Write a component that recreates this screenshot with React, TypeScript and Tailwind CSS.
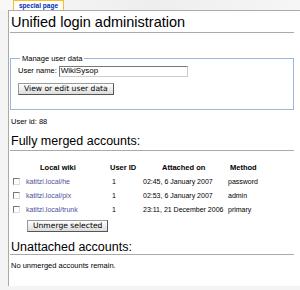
import React from "react";

const rows = [
  { wiki: "katitzi.local/he", id: "1", date: "02:45, 6 January 2007", method: "password" },
  { wiki: "katitzi.local/pix", id: "1", date: "02:53, 6 January 2007", method: "admin" },
  { wiki: "katitzi.local/trunk", id: "1", date: "23:11, 21 December 2006", method: "primary" },
];

function Button({ children }: { children: React.ReactNode }) {
  return (
    <span
      className="
        flex items-center h-[12px] px-[5px]
        bg-gradient-to-b from-[#ffffff] to-[#dcdcdc]
        border border-[#9a9a9a] border-r-[#555] border-b-[#555]
        text-[7.6px] leading-none text-black
        font-['DejaVu_Sans',sans-serif]
      "
    >
      {children}
    </span>
  );
}

function Checkbox() {
  return (
    <span className="block w-[7px] h-[7px] bg-white border border-[#777] border-r-[#ddd] border-b-[#ddd]" />
  );
}

export default function App() {
  return (
    <div className="w-[300px] h-[290px] overflow-hidden bg-[#f4f4f4] font-['Liberation_Sans',Arial,sans-serif] text-black">

      {/* TOP STRIP + TAB */}
      <div className="h-[10px] flex pl-[13px] bg-gradient-to-r from-[#f8f8f8] via-[#eeeeee] to-[#f6f6f6]">
        <div className="w-[51px] h-[10px] bg-white border border-b-0 border-[#fabd23] text-center text-[6.5px] leading-[9px] font-bold text-[#002bb8]">
          special page
        </div>
      </div>

      {/* CONTENT */}
      <div className="ml-[8px] h-[276px] overflow-hidden bg-white border-l border-t border-[#aaa] pl-[1px] pr-[6px]">

        {/* TITLE */}
        <h1 className="mt-[2px] pl-[1px] text-[14.5px] leading-[18px] pb-[1px] border-b border-[#aaa]">
          Unified login administration
        </h1>

        {/* FIELDSET */}
        <fieldset className="mt-[21px] border border-[#9fb6d8] pl-[7px] pb-[14px]">
          <legend className="ml-[2px] px-[2px] text-[7.5px] leading-[9px]">Manage user data</legend>

          <div className="mt-[2.5px] flex items-center h-[11px] text-[7.5px] leading-none">
            <span className="mr-[2px]">User name:</span>
            <span className="w-[129px] h-[11px] flex items-center pl-[1px] bg-white border border-[#777] border-r-[#ccc] border-b-[#ccc] text-[8px]">
              WikiSysop
            </span>
          </div>

          <div className="mt-[6px] flex">
            <Button>View or edit user data</Button>
          </div>
        </fieldset>

        <p className="mt-[7px] pl-[1px] text-[7.5px] leading-[9px]">User id: 88</p>

        {/* FULLY MERGED */}
        <h2 className="mt-[8px] pl-[1px] text-[12.5px] leading-[15px] pb-[1px] border-b border-[#aaa]">
          Fully merged accounts:
        </h2>

        <div className="mt-[10px] grid grid-cols-[14px_86px_31px_85px_1fr] text-[7px] leading-[14px]">
          {/* HEADER */}
          <span />
          <span className="pl-[16px] font-bold text-[7.5px]">Local wiki</span>
          <span className="font-bold text-[7.5px]">User ID</span>
          <span className="pl-[21px] font-bold text-[7.5px]">Attached on</span>
          <span className="pl-[4px] font-bold text-[7.5px]">Method</span>

          {rows.map((r) => (
            <React.Fragment key={r.wiki}>
              <span className="flex items-center pl-[3px]">
                <Checkbox />
              </span>
              <span className="pl-[2px] text-[#4f4f9f]">{r.wiki}</span>
              <span className="pl-[2px]">{r.id}</span>
              <span className="pl-[2px] whitespace-nowrap">{r.date}</span>
              <span className="pl-[2px]">{r.method}</span>
            </React.Fragment>
          ))}
        </div>

        <div className="mt-[3px] pl-[17px] flex">
          <Button>Unmerge selected</Button>
        </div>

        {/* UNATTACHED */}
        <h2 className="mt-[8px] pl-[1px] text-[12.5px] leading-[14px] border-b border-[#aaa]">
          Unattached accounts:
        </h2>

        <p className="mt-[6px] pl-[1px] text-[7.5px] leading-[9px]">No unmerged accounts remain.</p>
      </div>
    </div>
  );
}
